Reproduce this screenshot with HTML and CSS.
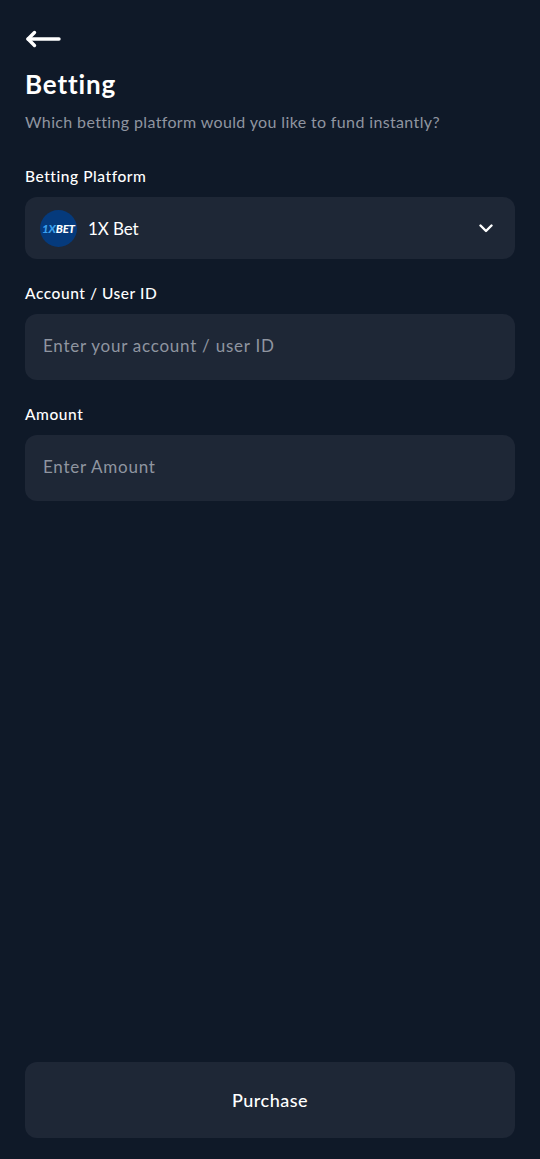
FILE: index.html
```html
<!DOCTYPE html>
<html lang="en">
<head>
  <meta charset="UTF-8">
  <meta name="viewport" content="width=device-width, initial-scale=1.0">
  <title>Betting</title>
  <link rel="stylesheet" href="styles.css">
</head>
<body>
  <div class="page">
    <button class="back" aria-label="Back">
      <svg width="36" height="20" viewBox="0 0 36 20" fill="none" stroke="#fff" stroke-width="3.400" stroke-linecap="round" stroke-linejoin="round">
        <path d="M3 10H34"/>
        <path d="M9.500 3.500L3 10l6.500 6.500"/>
      </svg>
    </button>

    <h1>Betting</h1>
    <p class="subtitle">Which betting platform would you like to fund instantly?</p>

    <form class="form">
      <label class="field-label">Betting Platform</label>
      <div class="select">
        <span class="brand"><span class="brand-one">1X</span>BET</span>
        <span class="select-value">1X Bet</span>
        <svg class="chevron" width="14" height="9" viewBox="0 0 14 9" fill="none" stroke="#fff" stroke-width="2.400" stroke-linecap="round" stroke-linejoin="round">
          <path d="M1.500 1.500L7 7l5.500-5.500"/>
        </svg>
      </div>

      <label class="field-label">Account / User ID</label>
      <div class="input">Enter your account / user ID</div>

      <label class="field-label">Amount</label>
      <div class="input">Enter Amount</div>
    </form>

    <button class="purchase" type="button">Purchase</button>
  </div>
</body>
</html>
```

FILE: styles.css
```css
:root {
  --color-bg: #0f1928;
  --color-field: #1e2736;
  --color-white: #fff;
  --color-muted: #8f95a0;
  --radius: 12px;
}

*, *::before, *::after {
  margin: 0; padding: 0; box-sizing: border-box;
}
body {
  font-family: Lato, "Noto Sans", sans-serif;
  color: var(--color-white);
  background: var(--color-bg);
}
button {
  font-family: inherit;
  border: none;
  background: none;
  color: inherit;
}

.page {
  height: 1159px;
  padding: 29px 25px 21px;
  display: flex;
  flex-direction: column;
}

.back {
  display: block;
  width: 36px;
  height: 20px;
  margin-bottom: 15px;
}
.back svg {
  display: block;
}

h1 {
  font-size: 26px;
  line-height: 40px;
  font-weight: 700;
  letter-spacing: .85px;
}
.subtitle {
  margin-top: 7px;
  font-size: 16px;
  line-height: 22px;
  color: var(--color-muted);
  letter-spacing: .36px;
}

.form {
  display: flex;
  flex-direction: column;
  flex: 1;
}
.field-label {
  font-size: 15.500px;
  line-height: 20px;
  font-weight: 500;
  letter-spacing: .55px;
  margin-bottom: 11px;
}
.subtitle + .form {
  margin-top: 33px;
}

.select {
  display: flex;
  align-items: center;
  height: 62px;
  padding: 0 22px 0 15px;
  margin-bottom: 24px;
  background: var(--color-field);
  border-radius: var(--radius);
}
.brand {
  flex: none;
  width: 37px;
  height: 37px;
  border-radius: 50%;
  background: #053a7c;
  display: flex;
  align-items: center;
  justify-content: center;
  font-size: 11.500px;
  font-weight: 900;
  font-style: italic;
  letter-spacing: -.2px;
  white-space: nowrap;
}
.brand-one {
  color: #3aa0ee;
}
.select-value {
  flex: 1;
  margin-left: 11px;
  font-size: 17px;
  letter-spacing: -.1px;
}

.input {
  display: flex;
  align-items: center;
  height: 66px;
  padding: 0 18px 3px;
  margin-bottom: 24px;
  background: var(--color-field);
  border-radius: var(--radius);
  font-size: 17px;
  letter-spacing: .75px;
  color: var(--color-muted);
}

.purchase {
  flex: none;
  height: 76px;
  width: 100%;
  background: var(--color-field);
  border-radius: var(--radius);
  font-size: 18px;
  font-weight: 500;
  letter-spacing: .5px;
}
```
